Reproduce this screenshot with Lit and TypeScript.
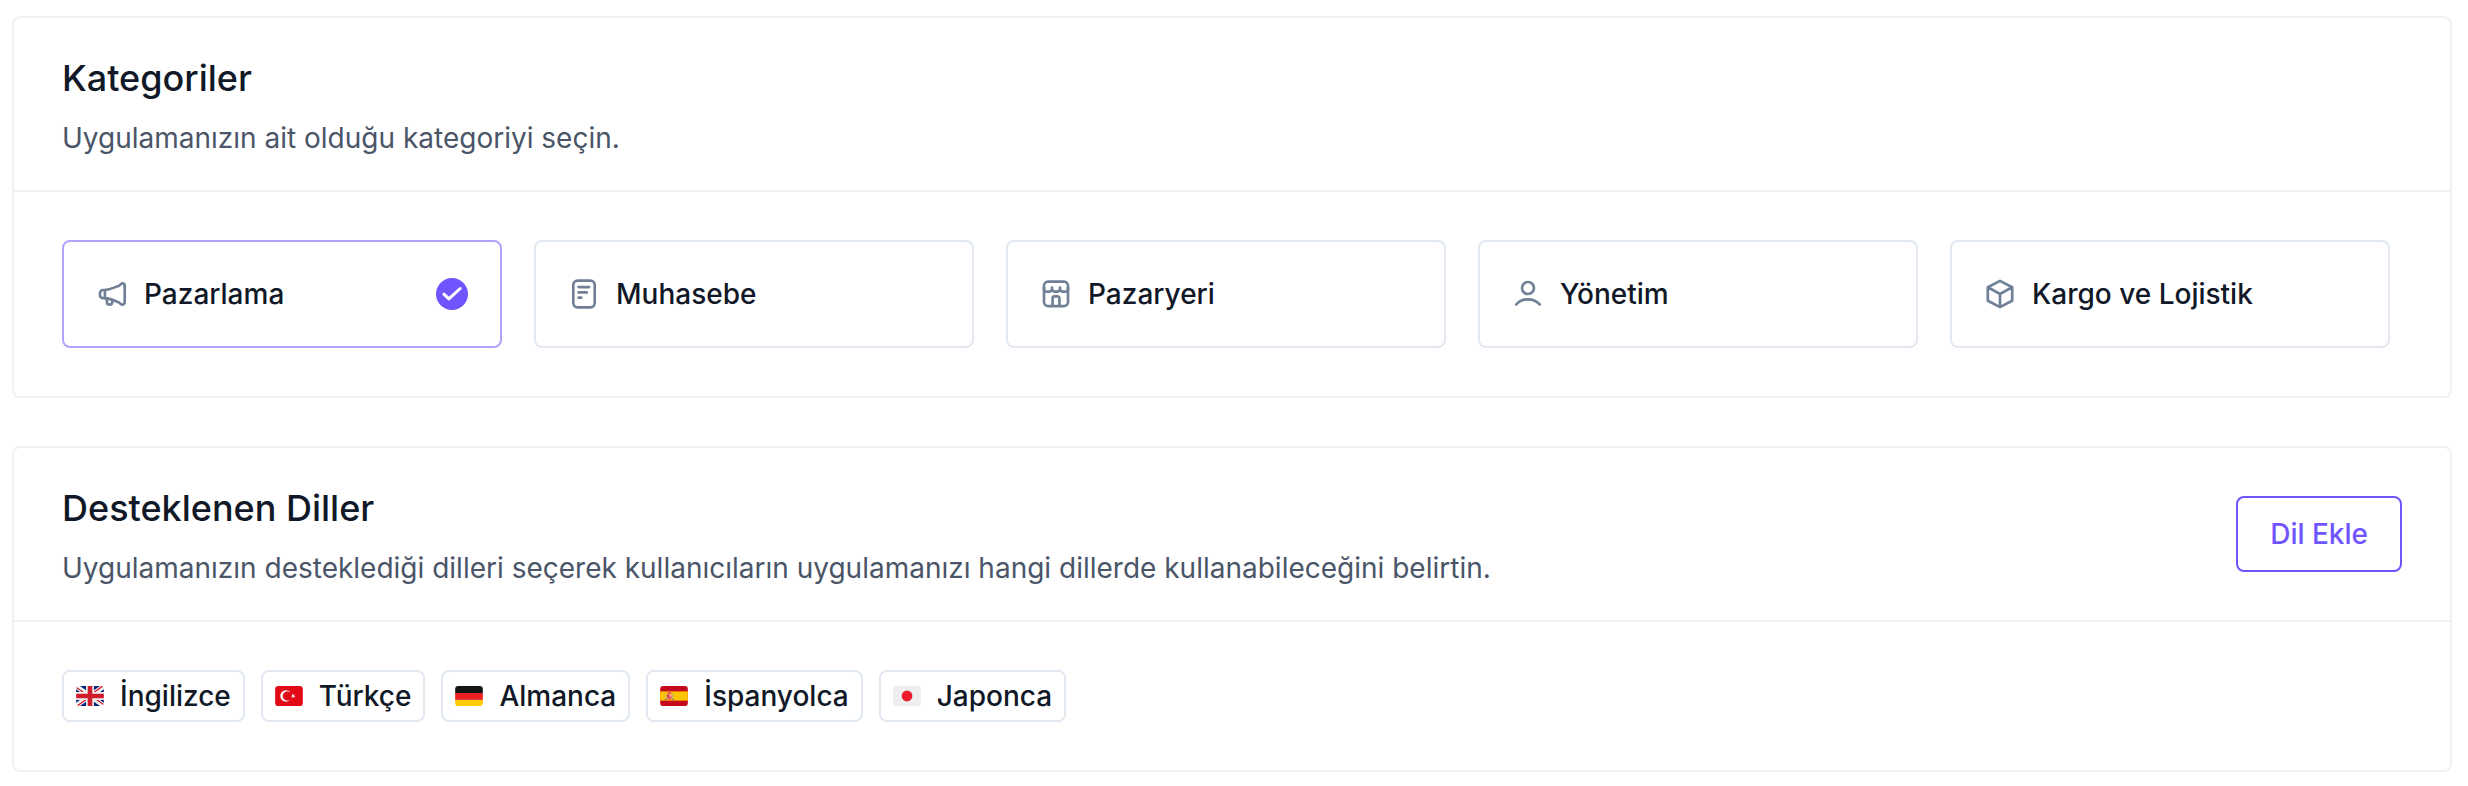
import { LitElement, html, css, svg } from "lit";
import { customElement, property } from "lit/decorators.js";
import { classMap } from "lit/directives/class-map.js";

const icons: Record<string, unknown> = {
  megaphone: svg`
    <path d="M8.9 12H7A3 3 0 0 0 4 15v2.200A3 3 0 0 0 7 20.200h1.900z"/>
    <path d="M8.900 12C14.500 11.600 18.500 9.200 22.500 8C24.300 7.200 24.700 5.300 26.300 5.300A2.400 2.400 0 0 1 28.700 7.700V24.300A2.400 2.400 0 0 1 26.300 26.700C24.700 26.700 24.300 25 22.500 24.200C18.500 22.600 14.500 20.600 8.900 20.200"/>
    <path d="M10.900 20.800V24a2.700 2.700 0 0 0 5.400 0V22.200"/>`,
  document: svg`
    <rect x="5.3" y="2.7" width="21.400" height="26.600" rx="4.200"/>
    <path d="M10.600 9.100H21.100M10.600 14.400H18.800M10.600 19.700H13.300"/>`,
  store: svg`
    <rect x="4" y="3.700" width="24" height="24.400" rx="4"/>
    <path d="M4 9.500V11.500a2.200 2.200 0 0 0 2.200 2.200H9A3 3 0 0 0 12 10.700V9.700M12 10.700a3 3 0 0 0 3 3h2a3 3 0 0 0 3-3V9.700M20 10.700a3 3 0 0 0 3 3h2.800a2.200 2.200 0 0 0 2.200-2.200V9.500M12.600 28V20.100a1.800 1.800 0 0 1 1.800-1.800h3.200a1.800 1.800 0 0 1 1.800 1.800V28"/>`,
  user: svg`
    <circle cx="16" cy="10" r="6"/>
    <path d="M4.200 26.500C7 23.200 11.300 21.300 16 21.300S25 23.200 27.800 26.500"/>`,
  box: svg`
    <path d="M16 2.900L28.200 9.200V22.800L16 29.100L3.800 22.800V9.200ZM3.800 9.200L16 16L28.200 9.200M16 16V29.100"/>`,
};

const flags: Record<string, unknown> = {
  gb: svg`
    <path fill="#00247D" d="M0 9.059V13h5.628zM4.664 31H13v-5.837zM23 25.164V31h8.335zM0 23v3.941L5.630 23zM31.337 5H23v5.837zM36 26.942V23h-5.631zM36 13V9.059L30.371 13zM13 5H4.664L13 10.837z"/>
    <path fill="#CF1B2B" d="M25.140 23l9.712 6.801c.471-.479.808-1.082.990-1.749L28.627 23H25.140zM13 23h-2.141l-9.711 6.800c.521.530 1.189.909 1.938 1.085L13 23.943V23zm10-10h2.141l9.711-6.800c-.521-.530-1.188-.909-1.937-1.085L23 12.057V13zm-12.141 0L1.148 6.200C.677 6.680.340 7.282.157 7.949L7.372 13h3.487z"/>
    <path fill="#EEE" d="M36 21H21v10h2v-5.836L31.335 31H32c1.117 0 2.126-.461 2.852-1.199L25.140 23h3.487l7.215 5.052c.093-.337.158-.686.158-1.052v-.058L30.369 23H36v-2zM0 21v2h5.630L0 26.941V27c0 1.091.439 2.078 1.148 2.800l9.711-6.800H13v.943l-9.814 6.941c.264.063.535.116.814.116h.664L13 25.163V31h2V21H0zM36 9c0-1.091-.439-2.078-1.148-2.800L25.141 13H23v-.943l9.815-6.942C32.551 5.052 32.280 5 32 5h-.663L23 10.837V5h-2v10h15v-2h-5.629L36 9.059V9zM13 5v5.837L4.664 5H4c-1.118 0-2.126.461-2.852 1.200l9.711 6.800H7.372L.157 7.949C.065 8.286 0 8.634 0 9v.059L5.628 13H0v2h15V5h-2z"/>
    <path fill="#CF1B2B" d="M21 15V5h-6v10H0v6h15v10h6V21h15v-6z"/>`,
  tr: svg`
    <rect y="5" width="36" height="26" rx="4" fill="#E30917"/>
    <path fill="#EEE" d="M16 24c-3.314 0-6-2.685-6-6 0-3.314 2.686-6 6-6 1.310 0 2.520.425 3.507 1.138-1.348-1.524-3.312-2.491-5.507-2.491-4.061 0-7.353 3.292-7.353 7.353 0 4.062 3.292 7.354 7.353 7.354 2.195 0 4.160-.967 5.507-2.492C18.521 23.575 17.312 24 16 24zm3.913-5.770l2.440.562.220 2.493 1.288-2.146 2.440.561-1.644-1.888 1.287-2.147-2.303.980-1.644-1.889.220 2.494z"/>`,
  de: svg`
    <path fill="#FFCD05" d="M0 27a4 4 0 0 0 4 4h28a4 4 0 0 0 4-4v-4H0z"/>
    <path fill="#ED1F24" d="M0 14h36v9H0z"/>
    <path fill="#141414" d="M32 5H4a4 4 0 0 0-4 4v5h36V9a4 4 0 0 0-4-4z"/>`,
  es: svg`
    <path fill="#C60A1D" d="M36 27a4 4 0 0 1-4 4H4a4 4 0 0 1-4-4V9a4 4 0 0 1 4-4h28a4 4 0 0 1 4 4z"/>
    <path fill="#FFC400" d="M0 12h36v12H0z"/>
    <path fill="#EA596E" d="M9 17v3a3 3 0 0 0 6 0v-3z"/>
    <path fill="#F4A2B2" d="M12 16h3v3h-3z"/>
    <path fill="#DD2E44" d="M9 16h3v3H9z"/>
    <ellipse cx="12" cy="14.500" rx="3" ry="1.500" fill="#EA596E"/>
    <path fill="#EA596E" d="M10 13h4v1h-4z"/>
    <path fill="#FFAC33" d="M9 15.300h6v.8H9z"/>
    <path fill="#99AAB5" d="M7 16h1v7H7zM16 16h1v7h-1z"/>
    <path fill="#66757F" d="M6 22h3v1H6zM15 22h3v1h-3z"/>
    <path fill="#AA8DD8" d="M6.500 15.400h2v.8h-2zM15.500 15.400h2v.8h-2z"/>`,
  jp: svg`
    <rect y="5" width="36" height="26" rx="4" fill="#EEE"/>
    <circle cx="18" cy="18" r="7" fill="#ED1B2F"/>`,
};

@customElement("section-card")
class SectionCard extends LitElement {
  @property() heading = "";
  @property() description = "";

  static styles = css`
    :host {
      display: block;
      border: 2px solid #edf2f7;
      border-radius: 8px;
      background: #fff;
    }
    .header {
      display: flex;
      align-items: center;
      justify-content: space-between;
      padding: 32px 48px;
      border-bottom: 2px solid #edf2f7;
    }
    .texts {
      display: flex;
      flex-direction: column;
      gap: 12px;
    }
    .title {
      margin: 0;
      font-size: 36px;
      line-height: 56px;
      font-weight: 500;
      color: #111827;
    }
    .description {
      margin: 0;
      font-size: 28px;
      line-height: 40px;
      color: #4a5568;
    }
    .body {
      padding: 48px;
    }
  `;

  render() {
    return html`
      <div class="header">
        <div class="texts">
          <h2 class="title">${this.heading}</h2>
          <p class="description">${this.description}</p>
        </div>
        <slot name="action"></slot>
      </div>
      <div class="body"><slot></slot></div>
    `;
  }
}

@customElement("app-root")
class AppRoot extends LitElement {
  private categories = [
    { icon: "megaphone", label: "Pazarlama", selected: true },
    { icon: "document", label: "Muhasebe", selected: false },
    { icon: "store", label: "Pazaryeri", selected: false },
    { icon: "user", label: "Yönetim", selected: false },
    { icon: "box", label: "Kargo ve Lojistik", selected: false },
  ];

  private languages = [
    { flag: "gb", label: "İngilizce" },
    { flag: "tr", label: "Türkçe" },
    { flag: "de", label: "Almanca" },
    { flag: "es", label: "İspanyolca" },
    { flag: "jp", label: "Japonca" },
  ];

  static styles = css`
    :host {
      display: flex;
      flex-direction: column;
      gap: 48px;
      box-sizing: border-box;
      min-height: 786px;
      padding: 16px 16px 14px 12px;
      background: #fff;
      color: #111827;
      font-family: Inter, "Liberation Sans", sans-serif;
      font-size: 28px;
      line-height: 40px;
    }
    .categories {
      display: flex;
      gap: 32px;
    }
    .category {
      display: flex;
      align-items: center;
      gap: 16px;
      box-sizing: border-box;
      width: 440px;
      height: 108px;
      padding: 0 32px;
      border: 2px solid #e2e8f0;
      border-radius: 8px;
      font-weight: 500;
    }
    .category.selected {
      border-color: #b3a1ff;
    }
    .label {
      flex: 1;
    }
    .icon {
      display: block;
      width: 32px;
      height: 32px;
      fill: none;
      stroke: #718096;
      stroke-width: 2.667;
      stroke-linecap: round;
      stroke-linejoin: round;
    }
    .check {
      display: block;
      width: 32px;
      height: 32px;
    }
    .button {
      box-sizing: border-box;
      height: 76px;
      padding: 0 34px;
      padding: 0 32px;
      border: 2px solid #7055ff;
      border-radius: 8px;
      background: #fff;
      color: #7055ff;
      font: inherit;
      font-weight: 500;
    }
    .languages {
      display: flex;
      gap: 16px;
    }
    .language {
      display: flex;
      align-items: center;
      gap: 16px;
      box-sizing: border-box;
      height: 52px;
      padding: 0 12px;
      border: 2px solid #e2e8f0;
      border-radius: 8px;
      font-weight: 500;
    }
    .flag {
      display: block;
      width: 28px;
      height: 20px;
      margin-bottom: 1px;
    }
  `;

  render() {
    return html`
      <section-card heading="Kategoriler" description="Uygulamanızın ait olduğu kategoriyi seçin.">
        <div class="categories">
          ${this.categories.map(
            (c) => html`
              <div class=${classMap({ category: true, selected: c.selected })}>
                <svg class="icon" viewBox="0 0 32 32">${icons[c.icon]}</svg>
                <span class="label">${c.label}</span>
                ${c.selected
                  ? html`<svg class="check" viewBox="0 0 32 32">
                      <circle cx="16" cy="16" r="16" fill="#7055ff" />
                      <path d="M7.900 16.200L12.900 20.900L24.200 10.500" fill="none" stroke="#fff" stroke-width="3" stroke-linecap="round" stroke-linejoin="round" />
                    </svg>`
                  : ""}
              </div>
            `
          )}
        </div>
      </section-card>
      <section-card
        heading="Desteklenen Diller"
        description="Uygulamanızın desteklediği dilleri seçerek kullanıcıların uygulamanızı hangi dillerde kullanabileceğini belirtin."
      >
        <button slot="action" class="button">Dil Ekle</button>
        <div class="languages">
          ${this.languages.map(
            (l) => html`
              <div class="language">
                <svg class="flag" viewBox="0 5 36 26">${flags[l.flag]}</svg>
                <span>${l.label}</span>
              </div>
            `
          )}
        </div>
      </section-card>
    `;
  }
}
